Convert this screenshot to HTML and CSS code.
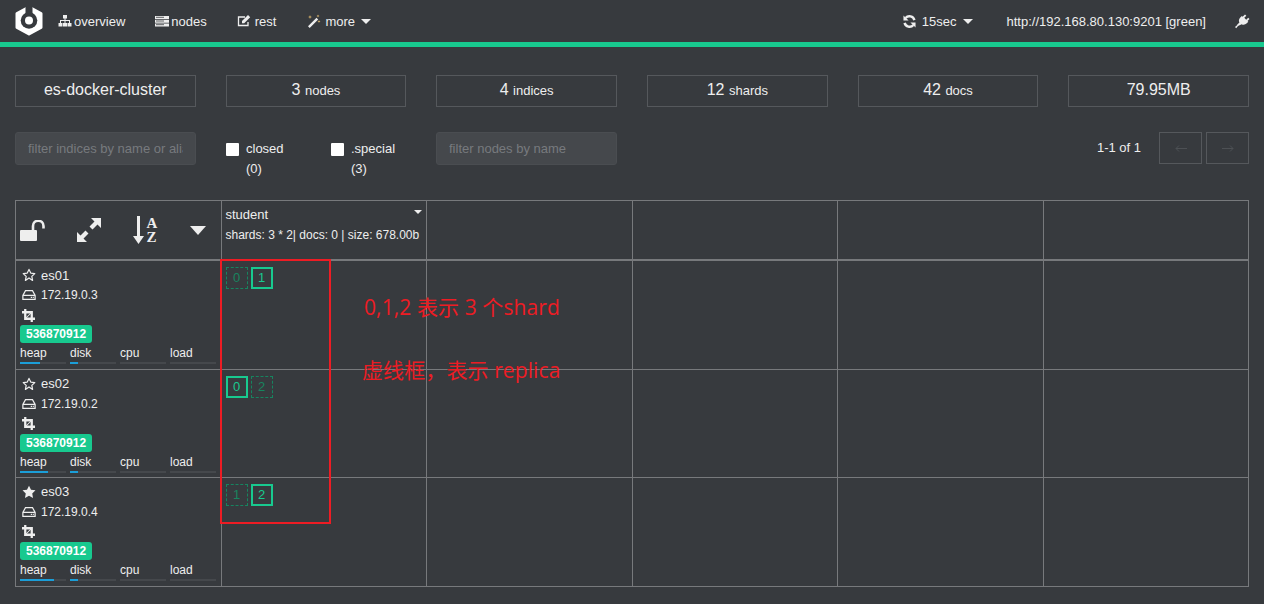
FILE: index.html
```html
<!DOCTYPE html>
<html lang="en">
<head>
    <meta charset="UTF-8">
    <meta name="viewport" content="width=device-width, initial-scale=1.0">
    <title>cerebro</title>
    <link rel="stylesheet" href="styles.css">
</head>
<body>
    <svg class="sprite" width="0" height="0">
        <symbol id="i-star-o" viewBox="0 0 16 16"><path d="M8 1.6l2 4.2 4.600.6-3.400 3.200.9 4.600L8 11.400l-4.100 2.800.9-4.600L1.400 6.400l4.600-.6z" fill="none" stroke="currentColor" stroke-width="1.400" stroke-linejoin="round"/></symbol>
        <symbol id="i-star" viewBox="0 0 16 16"><path d="M8 .8l2.300 4.600 5.100.7-3.700 3.600.9 5.100L8 12.400l-4.600 2.400.9-5.100L.6 6.100l5.100-.7z" fill="currentColor"/></symbol>
        <symbol id="i-hdd" viewBox="0 0 16 16"><path d="M4 3h8l3 5.500V13H1V8.500z M1.500 8.500h13" fill="none" stroke="currentColor" stroke-width="1.400"/><path d="M10 10h1.500v1.300H10zM12.300 10h1.200v1.300h-1.200z" fill="currentColor"/></symbol>
        <symbol id="i-crop" viewBox="0 0 16 16"><path d="M4 0v12h12M0 4h12v12" fill="none" stroke="currentColor" stroke-width="2.800"/><path d="M4 12L12 4" stroke="currentColor" stroke-width="1.300"/></symbol>
    </svg>

    <nav class="navbar">
        <svg class="logo" viewBox="0 0 28 31" width="28" height="31"><path d="M14 2l12 6.500v14L14 29 2 22.500v-14z" fill="#fff" stroke="#fff" stroke-width="3" stroke-linejoin="round"/><circle cx="14" cy="15.500" r="8.300" fill="#373a3e"/><rect x="10.500" y="0" width="7" height="10" fill="#373a3e"/><circle cx="14" cy="15.500" r="4" fill="#fff"/></svg>
        <a class="nav-item nav-overview">
            <svg width="14" height="14" viewBox="0 0 14 14"><path d="M5 1h4v3.500H7.500V6H12v3h1.500v3.500h-4V9H11V7H7.500v2H9v3.500H5V9h1.500V7H3v2h1.500v3.500h-4V9H2V6h4.500V4.500H5z" fill="currentColor"/></svg>
            overview
        </a>
        <a class="nav-item nav-nodes">
            <svg width="14" height="14" viewBox="0 0 14 14"><path d="M0 2h14v3H0zM0 5.700h14v3H0zM0 9.400h14v3H0z" fill="currentColor"/><path d="M1 3.300h8M1 7h8M1 10.700h8" stroke="#373a3e" stroke-width=".8"/></svg>
            nodes
        </a>
        <a class="nav-item nav-rest">
            <svg width="14" height="14" viewBox="0 0 14 14"><path d="M11 8v3.500H1.500V3H8" fill="none" stroke="currentColor" stroke-width="1.300"/><path d="M5 7l6-6 2.200 2.200-6 6H5z" fill="currentColor"/></svg>
            rest
        </a>
        <a class="nav-item nav-more">
            <svg width="14" height="14" viewBox="0 0 14 14"><path d="M1 12.200L9.500 3.700l1.700 1.700-8.500 8.500z" fill="currentColor"/><path d="M3 1l.5 1.500L5 3l-1.500.5L3 5l-.5-1.500L1 3l1.500-.5zM11 .5l.4 1.100 1.100.4-1.100.4-.4 1.100-.4-1.100L9.500 2l1.100-.4zM12 6l.4 1.100 1.100.4-1.100.4-.4 1.100-.4-1.100-1.100-.4 1.100-.4z" fill="#d9b36c"/></svg>
            <span>more</span> <span class="caret"></span>
        </a>
        <div class="nav-right">
            <a class="nav-item nav-refresh">
                <svg width="13" height="13" viewBox="0 0 14 14"><path d="M12.300 5.500A5.500 5.500 0 0 0 2.800 3.300M1.700 8.500a5.500 5.500 0 0 0 9.500 2.200" fill="none" stroke="currentColor" stroke-width="2.600"/><path d="M.5.500v5.500H6zM13.500 13.500V8H8z" fill="currentColor"/></svg>
                <span>15sec</span> <span class="caret"></span>
            </a>
            <a class="nav-item nav-host">http://192.168.80.130:9201 [green]</a>
            <svg class="plug" width="15" height="15" viewBox="0 0 15 15"><path d="M10 .5l1.300 1.300-2 2 1.900 1.900 2-2 1.300 1.300-2 2 .8.800-1.500 1.500c-1.500 1.500-3.500 1.800-5.100.9L3 12 1.200 14.200 0 13l2.300-2-.2-.3 2.300-2.300C3.500 6.900 3.800 4.900 5.300 3.400L6.800 1.900l.8.800z" fill="currentColor"/></svg>
        </div>
    </nav>

    <div class="content">
        <div class="stats">
            <div class="stat">es-docker-cluster</div>
            <div class="stat">3 <small>nodes</small></div>
            <div class="stat">4 <small>indices</small></div>
            <div class="stat">12 <small>shards</small></div>
            <div class="stat">42 <small>docs</small></div>
            <div class="stat">79.95MB</div>
        </div>

        <div class="filters">
            <input class="filter" type="text" placeholder="filter indices by name or aliases">
            <div class="checks">
                <label class="check"><span class="box"></span><span>closed<br>(0)</span></label>
                <label class="check"><span class="box"></span><span>.special<br>(3)</span></label>
            </div>
            <input class="filter" type="text" placeholder="filter nodes by name">
            <div class="pager">
                <span class="pager-text">1-1 of 1</span>
                <span class="pager-btn">
                    <svg width="12" height="7" viewBox="0 0 12 7"><path d="M12 3.500H1M4 .5l-3 3 3 3" fill="none" stroke="currentColor"/></svg>
                </span>
                <span class="pager-btn">
                    <svg width="12" height="7" viewBox="0 0 12 7"><path d="M0 3.500h11M8 .5l3 3-3 3" fill="none" stroke="currentColor"/></svg>
                </span>
            </div>
        </div>

        <table class="overview">
            <tr class="head-row">
                <th class="first">
                    <div class="tools">
                        <svg width="25" height="21" viewBox="0 0 25 21"><path d="M1 10h15a1 1 0 0 1 1 1v9a1 1 0 0 1-1 1H1a1 1 0 0 1-1-1v-9a1 1 0 0 1 1-1z" fill="currentColor"/><path d="M13 10V6a5 5 0 0 1 10.500 0v2.500" fill="none" stroke="currentColor" stroke-width="2.600"/></svg>
                        <svg width="24" height="24" viewBox="0 0 24 24"><path d="M14 0h10v10l-3.500-3.500-5 5-3-3 5-5zM10 24H0V14l3.500 3.500 5-5 3 3-5 5z" fill="currentColor"/></svg>
                        <div class="sort">
                            <svg width="11" height="28" viewBox="0 0 11 28"><path d="M4 0h3v20h4l-5.500 8L0 20h4z" fill="currentColor"/></svg>
                            <div class="sort-letters"><span>A</span><span>Z</span></div>
                        </div>
                        <svg width="16" height="9" viewBox="0 0 16 9"><path d="M0 0h16L8 9z" fill="currentColor"/></svg>
                    </div>
                </th>
                <th class="index">
                    <div class="index-name">student <span class="caret mini"></span></div>
                    <div class="index-info">shards: 3 * 2| docs: 0 | size: 678.00b</div>
                </th>
                <th></th><th></th><th></th><th></th>
            </tr>
            <tr>
                <td class="node">
                    <div class="node-line"><svg width="14" height="14"><use href="#i-star-o"/></svg><span class="node-name">es01</span></div>
                    <div class="node-line"><svg width="14" height="14"><use href="#i-hdd"/></svg><span>172.19.0.3</span></div>
                    <div class="node-line"><svg width="13" height="13"><use href="#i-crop"/></svg></div>
                    <span class="badge">536870912</span>
                    <div class="metrics">
                        <div class="metric">heap<div class="bar"><i style="width:43%"></i></div></div>
                        <div class="metric">disk<div class="bar"><i style="width:17%"></i></div></div>
                        <div class="metric">cpu<div class="bar"></div></div>
                        <div class="metric">load<div class="bar"></div></div>
                    </div>
                </td>
                <td class="shards"><span class="shard replica">0</span><span class="shard">1</span></td>
                <td></td><td></td><td></td><td></td>
            </tr>
            <tr class="mid-row">
                <td class="node">
                    <div class="node-line"><svg width="14" height="14"><use href="#i-star-o"/></svg><span class="node-name">es02</span></div>
                    <div class="node-line"><svg width="14" height="14"><use href="#i-hdd"/></svg><span>172.19.0.2</span></div>
                    <div class="node-line"><svg width="13" height="13"><use href="#i-crop"/></svg></div>
                    <span class="badge">536870912</span>
                    <div class="metrics">
                        <div class="metric">heap<div class="bar"><i style="width:61%"></i></div></div>
                        <div class="metric">disk<div class="bar"><i style="width:17%"></i></div></div>
                        <div class="metric">cpu<div class="bar"></div></div>
                        <div class="metric">load<div class="bar"></div></div>
                    </div>
                </td>
                <td class="shards"><span class="shard">0</span><span class="shard replica">2</span></td>
                <td></td><td></td><td></td><td></td>
            </tr>
            <tr>
                <td class="node">
                    <div class="node-line"><svg width="14" height="14"><use href="#i-star"/></svg><span class="node-name">es03</span></div>
                    <div class="node-line"><svg width="14" height="14"><use href="#i-hdd"/></svg><span>172.19.0.4</span></div>
                    <div class="node-line"><svg width="13" height="13"><use href="#i-crop"/></svg></div>
                    <span class="badge">536870912</span>
                    <div class="metrics">
                        <div class="metric">heap<div class="bar"><i style="width:74%"></i></div></div>
                        <div class="metric">disk<div class="bar"><i style="width:17%"></i></div></div>
                        <div class="metric">cpu<div class="bar"></div></div>
                        <div class="metric">load<div class="bar"></div></div>
                    </div>
                </td>
                <td class="shards"><span class="shard replica">1</span><span class="shard">2</span></td>
                <td></td><td></td><td></td><td></td>
            </tr>
        </table>
    </div>

    <!-- red annotations drawn on top of the screenshot -->
    <div class="note-box"></div>
    <div class="note note-1">0,1,2 表示 3 个shard</div>
    <div class="note note-2">虚线框，表示 replica</div>
</body>
</html>
```

FILE: styles.css
```css
html, body {
    margin: 0;
    padding: 0;
}
body {
    position: relative;
    min-height: 604px;
    overflow: hidden;
    background: #373a3e;
    color: #eee;
    font-family: "Liberation Sans", Arial, sans-serif;
    font-size: 12px;
}
.sprite {
    position: absolute;
}
svg {
    display: block;
    flex: none;
}

/* navbar */
.navbar {
    display: flex;
    align-items: center;
    height: 42px;
    padding: 0 15px;
    border-bottom: 5px solid #18c98f;
    font-size: 13px;
}
.logo {
    margin-right: 15px;
    margin-top: -1px;
}
.nav-item {
    display: flex;
    align-items: center;
    gap: 2px;
    color: #eee;
}
.nav-overview { margin-right: 30px; }
.nav-nodes { margin-right: 30px; }
.nav-rest { margin-right: 31px; gap: 4px; }
.nav-more { gap: 4px; }
.nav-more .caret { margin-left: 2px; }
.nav-right {
    display: flex;
    align-items: center;
    margin-left: auto;
}
.nav-refresh { gap: 6px; margin-right: 33px; }
.nav-host { margin-right: 29px; }
.plug { margin-right: -1px; }
.caret {
    display: inline-block;
    width: 0;
    height: 0;
    margin-left: 1px;
    border-top: 5px solid #eee;
    border-left: 5px solid transparent;
    border-right: 5px solid transparent;
}
.caret.mini {
    position: absolute;
    top: 9px;
    right: 4px;
    border-top-width: 4px;
    border-left-width: 4px;
    border-right-width: 4px;
}

.content {
    padding: 28px 15px 0;
}

/* cluster stats */
.stats {
    display: grid;
    grid-template-columns: repeat(6, 1fr);
    gap: 30px;
    margin-bottom: 25px;
}
.stat {
    height: 30px;
    border: 1px solid #55585c;
    font-size: 16px;
    line-height: 28px;
    text-align: center;
}
.stat small {
    font-size: 13px;
}

/* filters */
.filters {
    display: flex;
    align-items: flex-start;
    height: 68px;
}
.filter {
    box-sizing: border-box;
    width: 181px;
    height: 33px;
    padding: 0 12px;
    border: 1px solid #4a4d51;
    border-radius: 3px;
    background: #45484c;
    color: #eee;
    font-family: inherit;
    font-size: 13px;
}
.filter::placeholder {
    color: #777a7e;
}
.checks {
    display: flex;
    width: 210px;
    margin-left: 30px;
}
.check {
    display: flex;
    gap: 7px;
    width: 105px;
    padding-top: 7px;
    font-size: 13px;
    line-height: 20px;
}
.box {
    width: 13px;
    height: 13px;
    margin-top: 4px;
    border-radius: 1px;
    background: #fff;
}
.pager {
    display: flex;
    align-items: center;
    gap: 4px;
    margin-left: auto;
    height: 32px;
}
.pager-text {
    margin-right: 14px;
    font-size: 13px;
    margin-top: -2px;
}
.pager-btn {
    display: flex;
    align-items: center;
    justify-content: center;
    box-sizing: border-box;
    width: 43px;
    height: 32px;
    border: 1px solid #55585c;
    color: #4d5054;
}

/* index/node table */
.overview {
    width: 1234px;
    table-layout: fixed;
    border-collapse: collapse;
    border: 1px solid #77797c;
}
.overview th,
.overview td {
    border: 1px solid #77797c;
    padding: 0;
    vertical-align: top;
    font-weight: 400;
    text-align: left;
}
.head-row {
    border-bottom: 2px solid #77797c;
}
.tools {
    display: flex;
    align-items: center;
    justify-content: space-between;
    height: 58px;
    padding: 0 15px 0 4px;
    box-sizing: border-box;
    color: #eee;
}
.sort {
    display: flex;
    gap: 2px;
}
.sort-letters {
    display: flex;
    flex-direction: column;
    font-family: "Liberation Serif", serif;
    font-size: 15px;
    font-weight: 700;
    line-height: 14px;
}
.index {
    position: relative;
}
.index-name {
    padding: 7px 4px 0;
    font-size: 13px;
    line-height: 14px;
}
.index-info {
    padding: 6px 4px 0;
    font-size: 12px;
    line-height: 14px;
    white-space: nowrap;
}

/* node cells */
.node {
    height: 109px;
    padding: 4px 4px 0 !important;
    box-sizing: border-box;
}
.mid-row .node {
    height: 108px;
}
.node-line {
    display: flex;
    align-items: center;
    gap: 5px;
    height: 20px;
    font-size: 12px;
    padding-left: 2px;
}
.node-name {
    font-size: 13px;
}
.badge {
    display: inline-block;
    padding: 0 6px;
    height: 18px;
    border-radius: 3px;
    background: #18c98f;
    color: #fff;
    font-size: 12px;
    font-weight: 700;
    line-height: 18px;
}
.metrics {
    display: grid;
    grid-template-columns: repeat(4, 46px);
    gap: 4px;
    margin-top: 3px;
}
.metric {
    font-size: 12px;
    line-height: 14px;
}
.bar {
    height: 2px;
    margin-top: 2px;
    background: #45484c;
}
.bar i {
    display: block;
    height: 2px;
    background: #1b9ed8;
}

/* shards */
.shards {
    padding: 6px 4px 0 !important;
}
.shard {
    box-sizing: border-box;
    display: inline-block;
    width: 22px;
    height: 22px;
    margin-right: 3px;
    border: 2px solid #18c98f;
    color: #18c98f;
    font-size: 13px;
    line-height: 18px;
    text-align: center;
}
.shard.replica {
    border: 1px dashed #17845f;
    color: #17845f;
    line-height: 20px;
}

/* annotations */
.note-box {
    position: absolute;
    left: 220px;
    top: 259px;
    width: 107px;
    height: 261px;
    border: 2px solid #ed1c24;
}
.note {
    position: absolute;
    color: #ed1c24;
    font-family: "Open Sans", "Noto Sans CJK SC", sans-serif;
    font-size: 21px;
    letter-spacing: .1px;
    line-height: 28px;
    white-space: nowrap;
}
.note-1 { left: 364px; top: 293px; }
.note-2 { left: 362px; top: 356px; }
```
